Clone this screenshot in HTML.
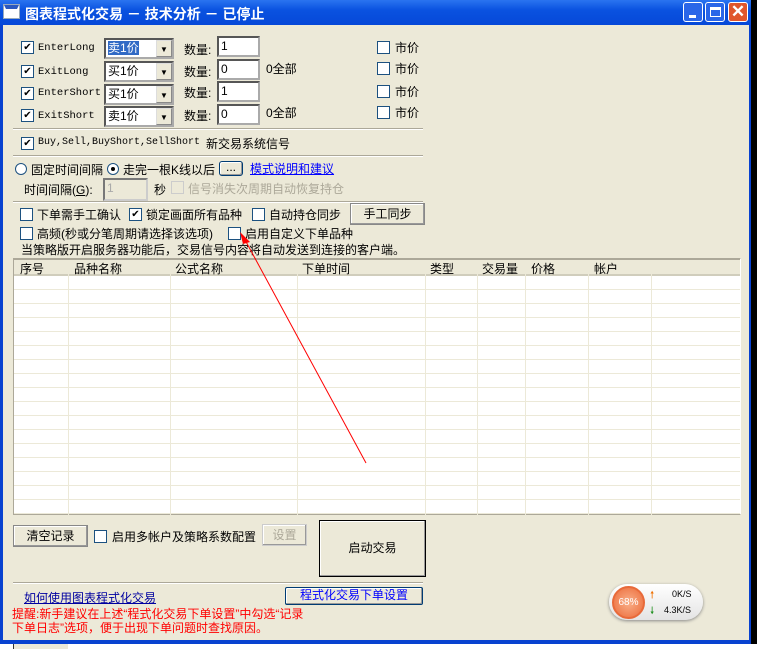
<!DOCTYPE html>
<html><head><meta charset="utf-8"><style>
*{margin:0;padding:0;box-sizing:border-box}
body{width:757px;height:649px;overflow:hidden;background:#000;position:relative;font-family:"Liberation Sans","Noto Sans CJK SC",sans-serif;font-size:12px;color:#000}
.a{position:absolute;white-space:nowrap}
#win{position:absolute;left:0;top:0;width:751px;height:644px;background:#0842d0;}
#title{position:absolute;left:0;top:0;width:751px;height:25px;background:linear-gradient(#2a74f0,#0a52e0 40%,#0648d8);color:#fff;font-weight:bold;font-size:14px}
#body{position:absolute;left:3px;top:25px;width:746px;height:615px;background:#ECE9D8}
.cb{position:absolute;width:13px;height:13px;background:#fff;border:1px solid #1c5180;font-size:10px;line-height:11px;text-align:center}
.tb{position:absolute;background:#fff;border:2px inset #aaa;height:21px;padding-left:2px;font-size:12px;line-height:16px}
.sel{position:absolute;background:#fff;border:2px inset #aaa;height:21px;width:70px;font-size:12px;line-height:17px;padding-left:2px}
.sel i{position:absolute;right:0;top:0;width:16px;height:17px;background:#ECE9D8;border:1px outset #ddd;font-style:normal;font-size:8px;text-align:center;line-height:17px}
.btn{position:absolute;background:#ECE9D8;border:1px solid #888;box-shadow:inset -1px -1px #999,inset 1px 1px #fff;text-align:center}
.hr{position:absolute;height:2px;border-top:1px solid #aca899;border-bottom:1px solid #fff}
.mono{font-family:"Liberation Mono",monospace;font-size:10.5px;line-height:14px}
</style></head><body>
<div id="win">
<div id="title">
 <div class="a" style="left:4px;top:5px;width:15px;height:13px;background:#fff;border:2px solid #fff;border-top:4px solid #2a58c0;outline:1px solid #9ab"></div>
 <div class="a" style="left:25px;top:4px">图表程式化交易 － 技术分析 － 已停止</div>
 <div class="a" style="left:683px;top:2px;width:20px;height:20px;border:1px solid #fff;border-radius:3px;background:#2a66e8"><div style="position:absolute;left:5px;top:12px;width:7px;height:3px;background:#fff"></div></div>
 <div class="a" style="left:705px;top:2px;width:20px;height:20px;border:1px solid #fff;border-radius:3px;background:#2a66e8"><div style="position:absolute;left:4px;top:4px;width:11px;height:10px;border:1px solid #fff;border-top:3px solid #fff"></div></div>
 <div class="a" style="left:728px;top:2px;width:20px;height:20px;border:1px solid #fff;border-radius:3px;background:#e0562c;color:#fff;font-size:17px;line-height:18px;text-align:center">✕</div>
</div>
<div id="body"></div>
</div>
<div class="a" style="left:751px;top:0;width:6px;height:649px;background:#000"></div>
<div class="a" style="left:0;top:644px;width:757px;height:5px;background:#fff"></div>
<div class="a" style="left:13px;top:644px;width:55px;height:5px;background:#ECE9D8;border-left:1px solid #333"></div>

<div class="cb" style="left:21px;top:41px">✔</div><div class="a mono" style="left:38px;top:41px">EnterLong</div>
<div class="sel" style="left:104px;top:38px;background:#fff"><span style="background:#316ac5;color:#fff">卖1价</span><i>▼</i></div>
<div class="a" style="left:184px;top:41px">数量:</div><div class="tb" style="left:217px;top:36px;width:43px">1</div>
<div class="cb" style="left:377px;top:41px"></div><div class="a" style="left:395px;top:39px">市价</div>

<div class="cb" style="left:21px;top:65px">✔</div><div class="a mono" style="left:38px;top:65px">ExitLong</div>
<div class="sel" style="left:104px;top:61px">买1价<i>▼</i></div>
<div class="a" style="left:184px;top:63px">数量:</div><div class="tb" style="left:217px;top:59px;width:43px">0</div><div class="a" style="left:266px;top:60px">0全部</div>
<div class="cb" style="left:377px;top:62px"></div><div class="a" style="left:395px;top:60px">市价</div>

<div class="cb" style="left:21px;top:87px">✔</div><div class="a mono" style="left:38px;top:86px">EnterShort</div>
<div class="sel" style="left:104px;top:84px">买1价<i>▼</i></div>
<div class="a" style="left:184px;top:84px">数量:</div><div class="tb" style="left:217px;top:81px;width:43px">1</div>
<div class="cb" style="left:377px;top:85px"></div><div class="a" style="left:395px;top:83px">市价</div>

<div class="cb" style="left:21px;top:109px">✔</div><div class="a mono" style="left:38px;top:109px">ExitShort</div>
<div class="sel" style="left:104px;top:106px">卖1价<i>▼</i></div>
<div class="a" style="left:184px;top:107px">数量:</div><div class="tb" style="left:217px;top:104px;width:43px">0</div><div class="a" style="left:266px;top:104px">0全部</div>
<div class="cb" style="left:377px;top:106px"></div><div class="a" style="left:395px;top:104px">市价</div>

<div class="hr" style="left:13px;top:128px;width:410px"></div>
<div class="cb" style="left:21px;top:137px">✔</div><div class="a mono" style="left:38px;top:136px;font-size:10px">Buy,Sell,BuyShort,SellShort</div><div class="a" style="left:206px;top:135px">新交易系统信号</div>
<div class="hr" style="left:13px;top:155px;width:410px"></div>

<div class="a" style="left:15px;top:163px;width:12px;height:12px;border-radius:50%;background:#fff;border:1px solid #1c5180"></div>
<div class="a" style="left:31px;top:161px">固定时间间隔</div>
<div class="a" style="left:107px;top:163px;width:12px;height:12px;border-radius:50%;background:#fff;border:1px solid #1c5180"><div style="position:absolute;left:3px;top:3px;width:4px;height:4px;border-radius:50%;background:#000"></div></div>
<div class="a" style="left:123px;top:161px">走完一根K线以后</div>
<div class="btn" style="left:219px;top:161px;width:24px;height:15px;border-radius:3px;border-color:#003c74;line-height:11px">...</div>
<div class="a" style="left:250px;top:160px;text-decoration:underline;color:#0000ff">模式说明和建议</div>
<div class="a" style="left:24px;top:181px">时间间隔(<u>G</u>):</div>
<div class="tb" style="left:103px;top:178px;width:45px;height:23px;background:#ECE9D8;color:#aaa;border-color:#ccc">1</div>
<div class="a" style="left:154px;top:181px">秒</div>
<div class="cb" style="left:171px;top:181px;border-color:#ccc;background:#ECE9D8"></div><div class="a" style="left:188px;top:180px;color:#aca899">信号消失次周期自动恢复持仓</div>
<div class="hr" style="left:13px;top:201px;width:410px"></div>

<div class="cb" style="left:20px;top:208px"></div><div class="a" style="left:37px;top:206px">下单需手工确认</div>
<div class="cb" style="left:129px;top:208px">✔</div><div class="a" style="left:146px;top:206px">锁定画面所有品种</div>
<div class="cb" style="left:252px;top:208px"></div><div class="a" style="left:269px;top:206px">自动持仓同步</div>
<div class="btn" style="left:350px;top:203px;width:75px;height:22px;line-height:20px">手工同步</div>
<div class="cb" style="left:20px;top:227px"></div><div class="a" style="left:37px;top:225px">高频(秒或分笔周期请选择该选项)</div>
<div class="cb" style="left:228px;top:227px"></div><div class="a" style="left:245px;top:225px">启用自定义下单品种</div>
<div class="a" style="left:21px;top:241px">当策略版开启服务器功能后，交易信号内容将自动发送到连接的客户端。</div>

<div class="a" style="left:13px;top:258px;width:728px;height:257px;background:#fff;border:1px solid #aca899;border-right-color:#fff;background-image:repeating-linear-gradient(#fff 0 13px,#ECE9D8 13px 14px);background-position:0 17px"></div>
<div class="a" style="left:14px;top:259px;width:726px;height:17px;background:#ECE9D8;border-bottom:2px solid #d0cdbc;border-top:1px solid #aca899"></div>
<div class="a" style="left:20px;top:260px">序号</div>
<div class="a" style="left:74px;top:260px">品种名称</div>
<div class="a" style="left:175px;top:260px">公式名称</div>
<div class="a" style="left:302px;top:260px">下单时间</div>
<div class="a" style="left:430px;top:260px">类型</div>
<div class="a" style="left:482px;top:260px">交易量</div>
<div class="a" style="left:531px;top:260px">价格</div>
<div class="a" style="left:594px;top:260px">帐户</div>
<div class="a" style="left:68px;top:261px;width:1px;height:254px;background:#ECE9D8"></div>
<div class="a" style="left:170px;top:261px;width:1px;height:254px;background:#ECE9D8"></div>
<div class="a" style="left:297px;top:261px;width:1px;height:254px;background:#ECE9D8"></div>
<div class="a" style="left:425px;top:261px;width:1px;height:254px;background:#ECE9D8"></div>
<div class="a" style="left:477px;top:261px;width:1px;height:254px;background:#ECE9D8"></div>
<div class="a" style="left:525px;top:261px;width:1px;height:254px;background:#ECE9D8"></div>
<div class="a" style="left:588px;top:261px;width:1px;height:254px;background:#ECE9D8"></div>
<div class="a" style="left:651px;top:261px;width:1px;height:254px;background:#ECE9D8"></div>

<svg class="a" style="left:0;top:0" width="757" height="649"><line x1="366" y1="463" x2="244" y2="238" stroke="#f00" stroke-width="1"/><polygon points="240,232 250,242 243,244" fill="#f00"/></svg>

<div class="btn" style="left:13px;top:525px;width:75px;height:22px;line-height:20px">清空记录</div>
<div class="cb" style="left:94px;top:530px"></div><div class="a" style="left:112px;top:528px">启用多帐户及策略系数配置</div>
<div class="btn" style="left:262px;top:524px;width:45px;height:22px;line-height:20px;color:#aca899;border-color:#ccc">设置</div>
<div class="btn" style="left:319px;top:520px;width:107px;height:57px;line-height:55px;border-color:#000">启动交易</div>
<div class="hr" style="left:13px;top:582px;width:410px"></div>
<div class="a" style="left:24px;top:589px;text-decoration:underline;color:#0000a0">如何使用图表程式化交易</div>
<div class="btn" style="left:285px;top:587px;width:138px;height:18px;line-height:15px;color:#0000ff;border-color:#003c74;border-radius:2px">程式化交易下单设置</div>
<div class="a" style="left:12px;top:607px;color:#f00;line-height:14px">提醒:新手建议在上述“程式化交易下单设置”中勾选“记录<br>下单日志”选项，便于出现下单问题时查找原因。</div>

<div class="a" style="left:609px;top:584px;width:94px;height:36px;border-radius:18px;background:linear-gradient(#fff,#e4e4e4);box-shadow:0 1px 3px #888"></div>
<div class="a" style="left:612px;top:586px;width:33px;height:33px;border-radius:50%;background:radial-gradient(#f9b08a,#ec6a38);border:2px solid #e86a3a;color:#fff;font-size:10px;line-height:29px;text-align:center">68%</div>
<div class="a" style="left:650px;top:588px;color:#f07000;font-size:10px">🠕</div>
<div class="a" style="left:672px;top:589px;font-size:9px">0K/S</div>
<div class="a" style="left:650px;top:604px;color:#209020;font-size:10px">🠗</div>
<div class="a" style="left:664px;top:605px;font-size:9px">4.3K/S</div>
</body></html>
